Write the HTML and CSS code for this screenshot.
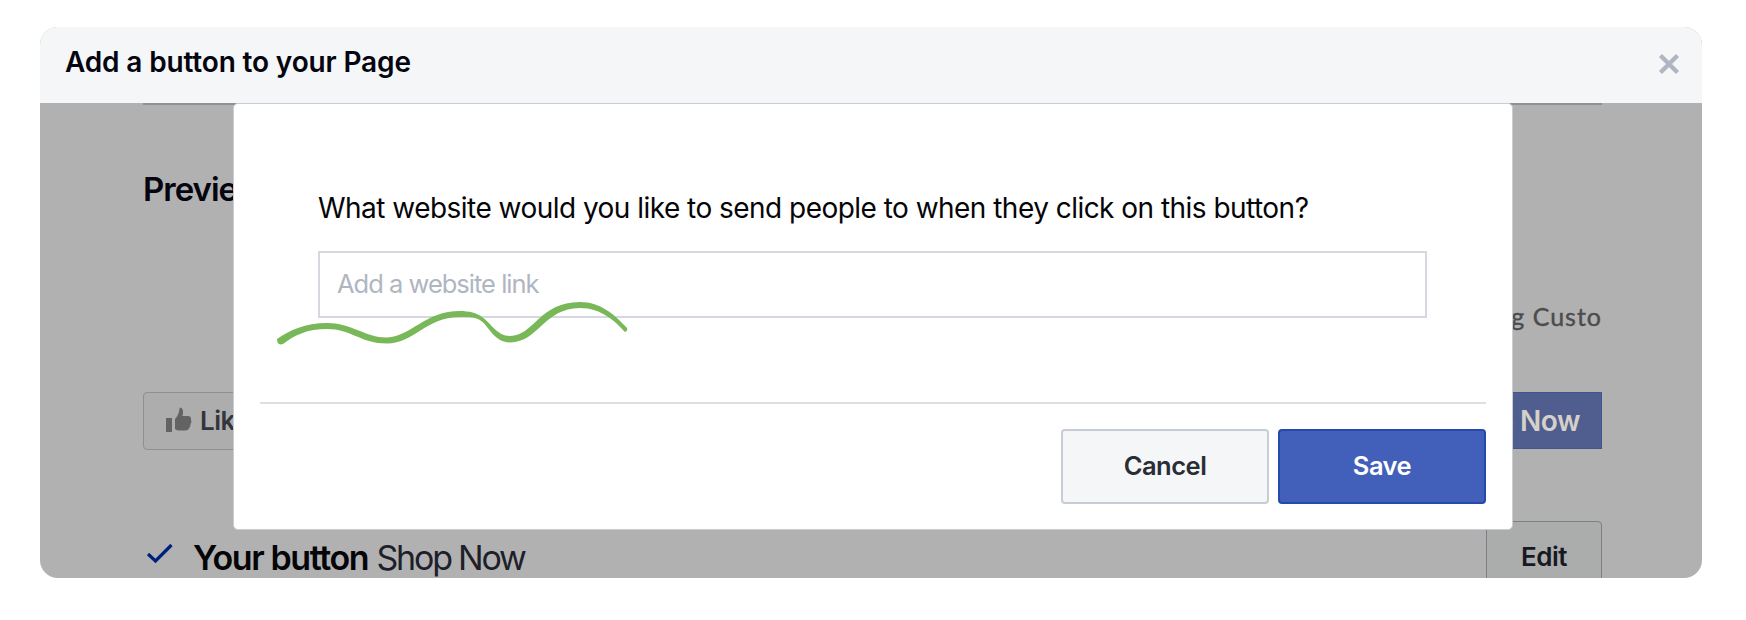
FILE: index.html
```
<!DOCTYPE html>
<html lang="en">

<head>
    <meta charset="UTF-8">
    <meta name="viewport" content="width=device-width, initial-scale=1.0">
    <title>Add a button to your Page</title>
    <link rel="stylesheet" href="styles.css">
</head>

<body>
    <div class="window">
        <div class="header">
            <h1 class="title">Add a button to your Page</h1>
            <svg class="close" width="22" height="22" viewBox="0 0 22 22">
                <path d="M2.5 2.5 L19.5 19.5 M19.5 2.5 L2.5 19.5" fill="none" stroke="#b0b5c1" stroke-width="4.4" />
            </svg>
        </div>

        <div class="pane">
            <h2 class="preview">Preview</h2>
            <div class="page-info">
                <div class="tagline">g Custo</div>
            </div>
            <div class="page-actions">
                <div class="like">
                    <svg width="26" height="26" viewBox="0 0 26 26" fill="#636363">
                        <path d="M0 11 H6 V25 H0 Z" />
                        <path d="M9 12 Q13 8 13.5 1.5 Q14 0 15.5 1 Q18 3 16.5 9 H22 Q25 9 25 12 Q26 15 24.6 17 Q24.5 20 23 21 Q22.5 23.5 19 23.5 H13 Q11 23.5 9 22 Z" />
                    </svg>
                    <span>Like</span>
                </div>
                <div class="shop">Shop Now</div>
            </div>
            <div class="your-button">
                <svg class="check" width="28" height="22" viewBox="0 0 28 22">
                    <path d="M2 11 L9.5 18 L25.5 2" fill="none" stroke="#00207d" stroke-width="3.2" />
                </svg>
                <p><b>Your button</b> <span>Shop Now</span></p>
                <div class="edit">Edit</div>
            </div>
        </div>

        <div class="modal">
            <div class="modal-body">
                <label class="question" for="link">What website would you like to send people to when they click on this button?</label>
                <input type="text" id="link" class="link" placeholder="Add a website link">
                <svg class="squiggle" width="356" height="48" viewBox="0 0 356 48" fill="#79b858">
                    <path d="M0 36 C13 27 28 20 50 20 C74 20 90 35 110 34.5 C135 33 148 8 183 8 C192 8 200 10 205 14 C214 20 220 33 233 33 C257 33 262 -1 303 -1 C324 -1 338 12 350 25 Q351 28 348 29 C338 18 324 5 303 5 C267 5 262 39 233 39.5 C216 39 212 22 202 16.5 C197 14 191 14 183 14 C148 14 138 40.5 110 40.5 C84 40.5 74 26 50 26 C30 26 18 32 6 41 Q0 43 0 36 Z" />
                </svg>
            </div>
            <div class="modal-footer">
                <button type="button" class="cancel"><span>Cancel</span></button>
                <button type="button" class="save"><span>Save</span></button>
            </div>
        </div>
    </div>
</body>

</html>
```
FILE: styles.css
```
* {
    padding: 0;
    margin: 0;
    box-sizing: border-box;
}

body {
    background-color: #fff;
    font-family: Inter, "Liberation Sans", sans-serif;
    padding: 27px 44px 0 40px;
}

.window {
    position: relative;
    height: 551px;
    border-radius: 18px;
    overflow: hidden;
    background-color: #b1b1b1;
}

.header {
    height: 76px;
    background-color: #f4f6f8;
    display: flex;
    justify-content: space-between;
    align-items: center;
    padding: 0 22px 6px 25px;
}

.title {
    font-size: 28px;
    line-height: 34px;
    font-weight: 600;
    letter-spacing: -0.15px;
    color: #050510;
}

.close {
    margin-top: 3px;
}

.pane {
    height: 475px;
    margin: 0 100px 0 103px;
    border-top: 2px solid #929292;
}

.preview {
    margin-top: 64px;
    font-size: 33px;
    line-height: 40px;
    font-weight: 600;
    letter-spacing: -1px;
    color: #050510;
}

.page-info {
    display: flex;
    justify-content: flex-end;
    margin-top: 92px;
}

.tagline {
    font-family: Lato, sans-serif;
    font-size: 25px;
    line-height: 30px;
    letter-spacing: 1px;
    color: #4c4c4c;
    -webkit-text-stroke: 0.4px #4c4c4c;
}

.page-actions {
    display: flex;
    justify-content: space-between;
    margin-top: 61px;
}

.like {
    height: 58px;
    width: 180px;
    display: flex;
    align-items: center;
    gap: 8px;
    padding: 0 0 2px 22px;
    border: 1px solid #8a9096;
    border-radius: 4px;
    background-color: #adadad;
    color: #33353c;
    font-size: 26px;
    font-weight: 600;
    letter-spacing: -0.5px;
}

.shop {
    width: 220px;
    height: 57px;
    padding-right: 21px;
    border: 1px solid #435590;
    background-color: #4f5e8e;
    color: #d5d0c8;
    font-size: 28px;
    font-weight: 600;
    letter-spacing: -0.5px;
    line-height: 56px;
    text-align: right;
}

.your-button {
    display: flex;
    align-items: flex-start;
    margin-top: 71px;
}

.check {
    margin: 22px 0 0 3px;
}

.your-button p {
    flex: 1;
    padding: 17px 0 0 19px;
    font-size: 34px;
    line-height: 40px;
    letter-spacing: -1.4px;
    color: #1d1f2a;
}

.your-button span {
    letter-spacing: -2.2px;
}

.your-button b {
    font-weight: 600;
    color: #050508;
}

.edit {
    width: 116px;
    height: 80px;
    border: 1px solid #7c8086;
    border-radius: 4px;
    background-color: #abadac;
    color: #171922;
    font-size: 26px;
    font-weight: 600;
    line-height: 70px;
    letter-spacing: -0.5px;
    text-align: center;
}

.modal {
    position: absolute;
    top: 76px;
    left: 193px;
    width: 1280px;
    height: 427px;
    padding: 0 26px;
    border: 1px solid #c9ccd4;
    border-radius: 5px;
    background-color: #fff;
}

.modal-body {
    position: relative;
    height: 300px;
    padding: 87px 58px 0;
    border-bottom: 2px solid #dddfe1;
}

.question {
    display: block;
    font-size: 28px;
    line-height: 34px;
    letter-spacing: -0.53px;
    white-space: nowrap;
    color: #050508;
}

.link {
    display: block;
    width: 1109px;
    height: 67px;
    margin-top: 26px;
    padding: 0 17px 3px;
    border: 2px solid #d5d9df;
    font-family: inherit;
    font-size: 25.5px;
    letter-spacing: -1px;
}

.link::placeholder {
    color: #b0b6c1;
}

.squiggle {
    position: absolute;
    left: 17px;
    top: 199px;
    overflow: visible;
}

.modal-footer {
    display: flex;
    justify-content: flex-end;
    gap: 9px;
    padding-top: 25px;
}

button {
    width: 208px;
    height: 75px;
    padding-bottom: 2px;
    border-radius: 4px;
    font-family: inherit;
    font-size: 25.5px;
    font-weight: 600;
    letter-spacing: -0.5px;
}

.cancel {
    border: 2px solid #c8ccd5;
    background-color: #f5f6f8;
    color: #292d36;
}

.save {
    border: 2px solid #2549ad;
    background-color: #425fb9;
    color: #fff;
}
```
